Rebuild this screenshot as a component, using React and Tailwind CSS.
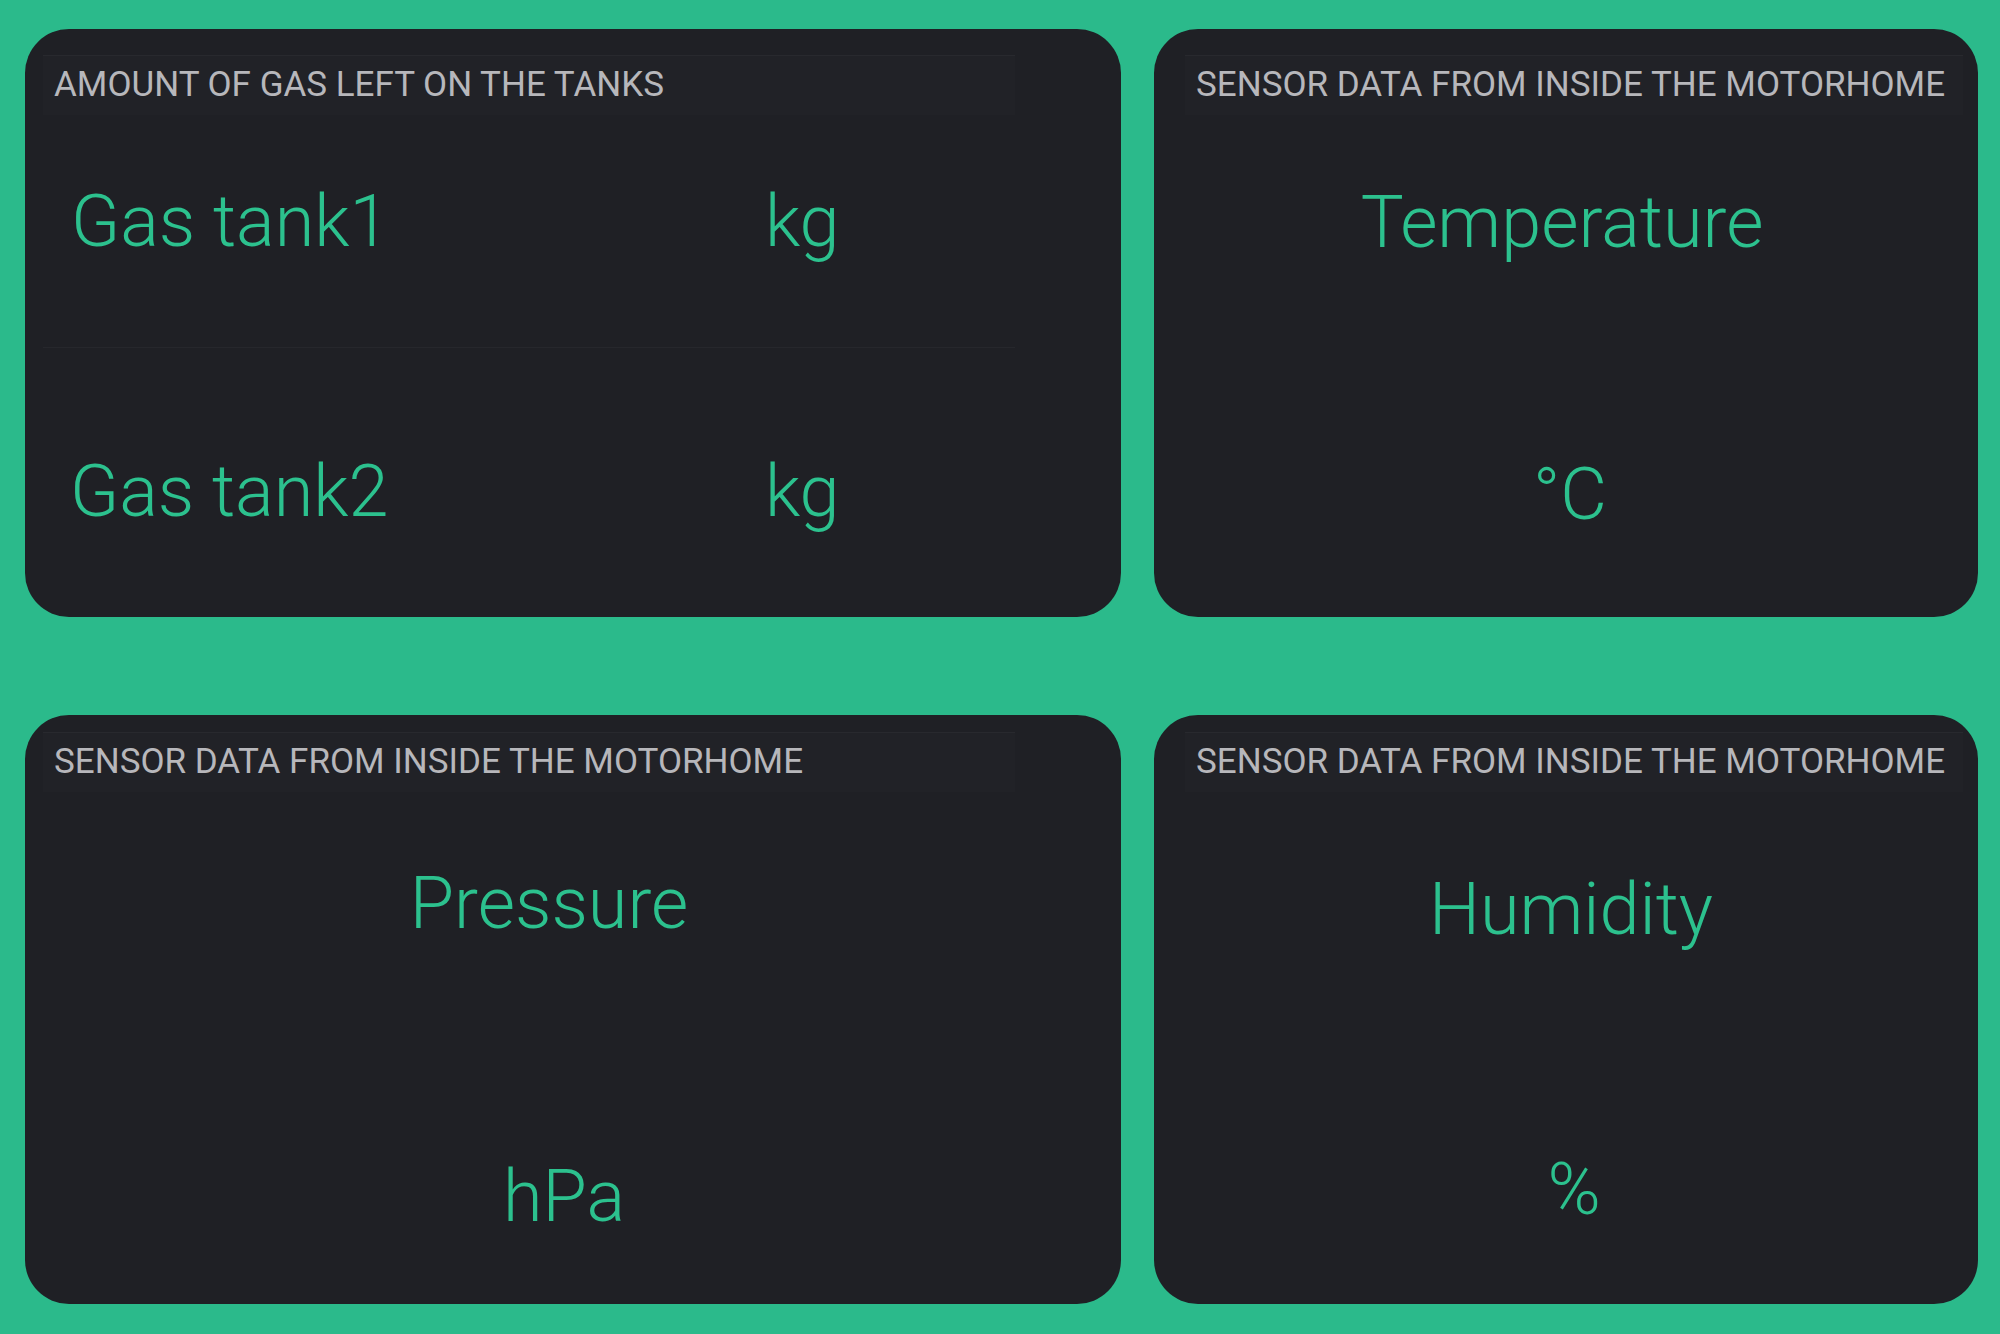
import React from "react";

const font = { fontFamily: 'Roboto, "Liberation Sans", sans-serif' };

function Header({ title }) {
  return (
    <div className="h-[60px] border-t border-[#28292e] bg-[#212227] px-[11px] text-[35px] leading-[58px] text-[#b7b7bb] whitespace-nowrap">
      {title}
    </div>
  );
}

function Value({ children, className }) {
  return (
    <div className={`flex justify-center text-[72px] font-light leading-[72px] text-[#2cc18e] whitespace-nowrap ${className}`}>
      {children}
    </div>
  );
}

function GasCard() {
  return (
    <div className="flex flex-col rounded-[44px] bg-[#1f2025] pt-[26px] pl-[18px] pr-[106px]">
      <Header title="AMOUNT OF GAS LEFT ON THE TANKS" />

      {/* Gas tank 1 */}
      <div className="mt-[71px] flex pl-[28px] text-[72px] font-light leading-[72px] text-[#2cc18e]">
        <span className="w-[694px]">Gas tank1</span>
        <span>kg</span>
      </div>

      <div className="mt-[89px] border-t border-[#26272c]" />

      {/* Gas tank 2 */}
      <div className="mt-[108px] flex pl-[27px] text-[72px] font-light leading-[72px] text-[#2cc18e]">
        <span className="w-[695px]">Gas tank2</span>
        <span>kg</span>
      </div>
    </div>
  );
}

function SensorCard({ top, label, unit, labelGap, unitGap, labelShift, unitShift }) {
  return (
    <div className="flex flex-col rounded-[44px] bg-[#1f2025]" style={{ paddingTop: top }}>
      <div className="pl-[31px] pr-[15px]">
        <Header title="SENSOR DATA FROM INSIDE THE MOTORHOME" />
      </div>
      <Value className={labelShift}>
        <span style={{ marginTop: labelGap }}>{label}</span>
      </Value>
      <Value className={unitShift}>
        <span style={{ marginTop: unitGap }}>{unit}</span>
      </Value>
    </div>
  );
}

export default function App() {
  return (
    <div
      className="grid h-[1334px] w-[2000px] grid-cols-[1096px_824px] grid-rows-[588px_589px] gap-x-[33px] gap-y-[98px] bg-[#2bba8b] pl-[25px] pt-[29px]"
      style={font}
    >
      <GasCard />
      <SensorCard
        top={26}
        label="Temperature"
        unit="°C"
        labelGap={72}
        unitGap={200}
        labelShift="pr-[8px]"
        unitShift="pl-[8px]"
      />
      <div className="flex flex-col rounded-[44px] bg-[#1f2025] pt-[17px]">
        <div className="pl-[18px] pr-[106px]">
          <Header title="SENSOR DATA FROM INSIDE THE MOTORHOME" />
        </div>
        <Value className="pr-[48px]">
          <span className="mt-[76px]">Pressure</span>
        </Value>
        <Value className="pr-[18px]">
          <span className="mt-[221px]">hPa</span>
        </Value>
      </div>
      <SensorCard
        top={17}
        label="Humidity"
        unit="%"
        labelGap={82}
        unitGap={208}
        labelShift="pl-[10px]"
        unitShift="pl-[16px]"
      />
    </div>
  );
}
